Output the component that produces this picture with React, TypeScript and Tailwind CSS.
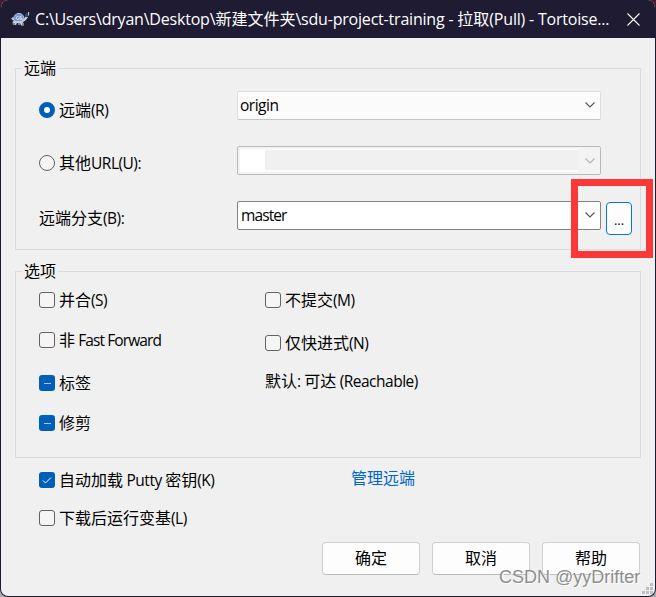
import type { ReactNode } from 'react';
import clsx from 'clsx';

// ── Text ──────────────────────────────────────────────────────
const LATIN = 'text-[15.5px] tracking-[-0.5px]';
const LATIN_TIGHT = 'text-[15.5px] tracking-[-0.9px]';

// Latin runs are set narrower than the Chinese ones
function Label({ children, latin = LATIN }: { children: string; latin?: string }) {
  const runs = children.split(/([\x20-\x7e]+)/).filter(Boolean);
  return (
    <span className="whitespace-pre">
      {runs.map((run, i) => (
        <span key={i} className={/^[\x20-\x7e]/.test(run) ? latin : undefined}>{run}</span>
      ))}
    </span>
  );
}

// ── Controls ──────────────────────────────────────────────────
function Radio({ checked, children }: { checked?: boolean; children: string }) {
  return (
    <label className="flex h-5 items-center gap-1">
      <span
        className={clsx(
          'h-4 w-4 shrink-0 rounded-full',
          checked ? 'border-[5px] border-[#005fb8] bg-white' : 'border border-[#626262] bg-[#f5f5f5]',
        )}
      />
      <Label>{children}</Label>
    </label>
  );
}

type CheckState = 'off' | 'on' | 'mixed';

interface CheckProps {
  state?: CheckState;
  className?: string;
  latin?: string;
  children: string;
}

function Check({ state = 'off', className, latin, children }: CheckProps) {
  return (
    <label className={clsx('flex h-5 items-center gap-1', className)}>
      <span
        className={clsx(
          'flex h-4 w-4 shrink-0 items-center justify-center rounded-[3px]',
          state === 'off' ? 'border border-[#626262] bg-[#f5f5f5]' : 'bg-[#005fb8]',
        )}
      >
        {state === 'mixed' && <span className="h-px w-[7px] bg-[#a5c8e8]" />}
        {state === 'on' && (
          <svg width="16" height="16" viewBox="0 0 16 16" fill="none" stroke="#fff">
            <path d="M4 8.5 6.5 11 12 5.5" />
          </svg>
        )}
      </span>
      <Label latin={latin}>{children}</Label>
    </label>
  );
}

function Chevron({ color }: { color: string }) {
  return (
    <svg className="shrink-0" width="10" height="6" viewBox="0 0 10 6" fill="none" stroke={color} strokeWidth="1.1">
      <path d="M.5.5 5 5 9.500.5" />
    </svg>
  );
}

function Combo({ className, color = '#555', children }: { className: string; color?: string; children?: ReactNode }) {
  return (
    <div className={clsx('flex h-[29px] w-[364px] items-center justify-between rounded-[2px] border pr-[5px]', className)}>
      {children}
      <Chevron color={color} />
    </div>
  );
}

function Group({ title, className, children }: { title: string; className: string; children: ReactNode }) {
  return (
    <section className={clsx('border border-[#dcdcdc]', className)}>
      <h2 className="-mt-[11px] ml-[6px] h-5 w-9 bg-[#f0f0f0] text-center leading-5">{title}</h2>
      {children}
    </section>
  );
}

function PushButton({ children }: { children: string }) {
  return (
    <button className="h-[33px] w-[98px] rounded-[4px] border border-[#d0d0d0] border-b-[#bcbcbc] bg-[#fdfdfd] pb-px">
      {children}
    </button>
  );
}

// ── Title bar icon ────────────────────────────────────────────
function Turtle() {
  return (
    <svg width="20" height="16" viewBox="0 0 20 16">
      <path d="M1 7.500 3 6l2 3-2 .5Z" fill="#b9c0c6" />
      <path d="M4 9.500 2.500 11 3 14h3l1-2h3l1 2.500h3L13 11l3-2 2-3-2.500-.5L13 9Z" fill="#c8cdd2" />
      <path d="M3 12h2v2H3zM8 12h2v2H8zM12 12h2v2h-2z" fill="#7b8791" />
      <path d="M3.500 9C3.500 5 5.500 2.500 9 2.500S14 5 14 8l-2.500 2.500H6Z" fill="#7794cc" stroke="#bccdea" strokeWidth=".9" />
      <path d="M8.500 5.500H7L6 7l1 1.500h1.500V7M11.500 5.500H10v3h2V7h-1.500" fill="none" stroke="#dfe8f6" strokeWidth=".8" />
      <path d="M15 4.500 16 2l2.500-.5V5L16 6.500Z" fill="#245068" />
      <path d="M18 1h1.200v3.500H18z" fill="#a9bdc8" />
    </svg>
  );
}

export default function App() {
  return (
    <div className="relative h-[597px] w-[656px] overflow-hidden bg-[linear-gradient(#4a1830_0_50%,#aaa_50%)] font-['Open_Sans','Noto_Sans_CJK_SC',sans-serif] text-[16px] leading-5 text-black">
      <div className="flex h-full flex-col overflow-hidden rounded-[8px] border border-t-0 border-[#1e1b33] bg-[#f0f0f0]">
        <header className="flex h-[38px] shrink-0 items-center bg-[#1e1b33] pl-[9px] text-white">
          <Turtle />
          <div className="ml-[5px] w-[578px]">
            <Label latin="text-[16px] tracking-[-0.2px]">
              {'C:\\Users\\dryan\\Desktop\\新建文件夹\\sdu-project-training - 拉取(Pull) - Tortoise...'}
            </Label>
          </div>
          <svg className="ml-[14px]" width="13" height="13" viewBox="0 0 13 13" fill="none" stroke="#fff" strokeWidth="1.1">
            <path d="m.5.5 12 12m0-12-12 12" />
          </svg>
        </header>

        <main className="flex flex-col px-[14px] pt-[30px]">
          <Group title="远端" className="h-[182px] w-[626px]">
            <div className="mt-[13px] flex flex-col gap-[26px] pl-[23px]">
              <div className="flex h-[29px]">
                <div className="w-[198px] pt-[9px]"><Radio checked>远端(R)</Radio></div>
                <Combo className="border-[#dedede] border-b-[#c4c4c4] bg-[#fbfbfb] pb-px pl-[2px]">
                  <Label>origin</Label>
                </Combo>
              </div>
              <div className="flex h-[29px]">
                <div className="w-[198px] pt-[7px]"><Radio>其他URL(U):</Radio></div>
                <Combo className="border-[#bababa] bg-[#f3f3f3] pl-[2px]" color="#b4b4b4">
                  <div className="flex h-[23px] w-[338px] border-y border-b-2 border-white bg-[#f0f0f0]">
                    <span className="w-[25px] bg-white" />
                  </div>
                </Combo>
              </div>
              <div className="flex h-[29px]">
                <div className="w-[198px] pt-[7px]"><Label>远端分支(B):</Label></div>
                <Combo className="border-[#838383] bg-white pb-px pl-[3px]">
                  <Label latin={LATIN_TIGHT}>master</Label>
                </Combo>
                <button className="mt-px ml-[5px] h-[33px] w-[26px] shrink-0 rounded-[4px] border border-[#0078d4] bg-[#fdfdfd] pt-[3px] text-[13px]">
                  ...
                </button>
              </div>
            </div>
          </Group>

          <Group title="选项" className="mt-[21px] h-[187px] w-[626px]">
            <div className="flex pt-[9px] pl-[23px]">
              <div className="flex w-[226px] flex-col">
                <Check>并合(S)</Check>
                <Check className="mt-5" latin={LATIN_TIGHT}>非 Fast Forward</Check>
                <Check className="mt-[23px]" state="mixed">标签</Check>
                <Check className="mt-5" state="mixed">修剪</Check>
              </div>
              <div className="flex flex-col">
                <Check>不提交(M)</Check>
                <Check className="mt-[23px]">仅快进式(N)</Check>
                <div className="mt-[18px]"><Label>默认: 可达 (Reachable)</Label></div>
              </div>
            </div>
          </Group>

          <div className="mt-3 flex pl-6">
            <div className="flex w-[312px] flex-col gap-[18px]">
              <Check state="on">自动加载 Putty 密钥(K)</Check>
              <Check>下载后运行变基(L)</Check>
            </div>
            <a className="-mt-0.5 text-[#0066cc]">管理远端</a>
          </div>

          <footer className="mt-[14px] mr-px flex justify-end gap-3">
            <PushButton>确定</PushButton>
            <PushButton>取消</PushButton>
            <PushButton>帮助</PushButton>
          </footer>
        </main>
      </div>

      {/* Highlight around the branch picker */}
      <div className="absolute top-[179px] left-[571px] h-[79px] w-[82px] border-[7px] border-[#fc3737]" />

      {/* Resize grip */}
      <svg className="absolute right-[3px] bottom-[3px]" width="11" height="11" viewBox="0 0 11 11" fill="#bfbfbf">
        <path d="M8 0h3v3H8zM4 4h3v3H4zM8 4h3v3H8zM0 8h3v3H0zM4 8h3v3H4zM8 8h3v3H8z" />
      </svg>

      <span className="absolute top-[567px] left-[499px] font-['Liberation_Sans',sans-serif] text-[18px] whitespace-nowrap text-[#8f8f8f] [text-shadow:1px_1px_0_#fff]">
        CSDN @yyDrifter
      </span>
    </div>
  );
}
